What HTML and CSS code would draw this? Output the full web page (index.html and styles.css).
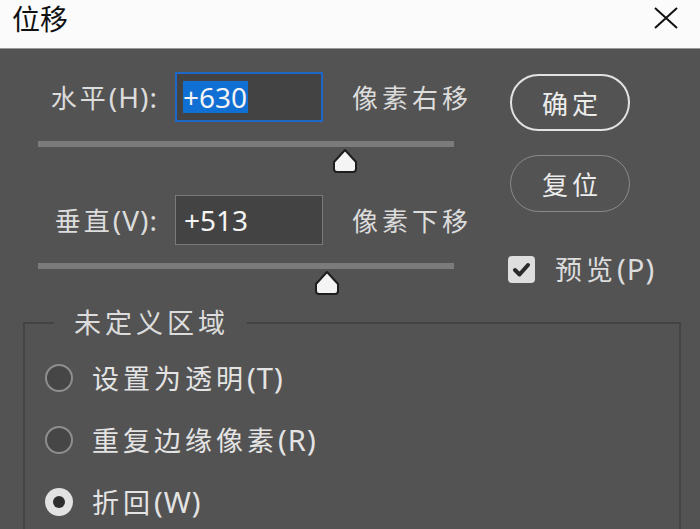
FILE: index.html
```html
<!DOCTYPE html>
<html lang="zh">
<head>
<meta charset="utf-8">
<title>位移</title>
<link rel="stylesheet" href="styles.css">
</head>
<body>
<div class="titlebar">
  <span class="title">位移</span>
  <svg class="close" width="24" height="22" viewBox="0 0 24 22"><path d="M1 1 L23 21 M23 1 L1 21" stroke="#111" stroke-width="2" fill="none"/></svg>
</div>
<div class="main">
  <div class="left">
    <div class="row r1">
      <span class="label"><span class="cjk">水平</span><span class="lat">(H):</span></span>
      <div class="input active"><span class="sel">+630</span></div>
      <span class="suffix">像素右移</span>
    </div>
    <div class="slider s1">
      <div class="track"></div>
      <svg class="thumb" style="left: 73.8%" width="28" height="26" viewBox="0 0 28 26"><path d="M14 2 L25 14 L25 21 Q25 24 22 24 L6 24 Q3 24 3 21 L3 14 Z" fill="#f4f4f4" stroke="#1e1e1e" stroke-width="2" stroke-linejoin="round"/></svg>
    </div>
    <div class="row r2">
      <span class="label"><span class="cjk">垂直</span><span class="lat">(V):</span></span>
      <div class="input"><span class="val">+513</span></div>
      <span class="suffix">像素下移</span>
    </div>
    <div class="slider s2">
      <div class="track"></div>
      <svg class="thumb" style="left: 69.5%" width="28" height="26" viewBox="0 0 28 26"><path d="M14 2 L25 14 L25 21 Q25 24 22 24 L6 24 Q3 24 3 21 L3 14 Z" fill="#f4f4f4" stroke="#1e1e1e" stroke-width="2" stroke-linejoin="round"/></svg>
    </div>
  </div>
  <div class="right">
    <div class="btn primary">确定</div>
    <div class="btn secondary">复位</div>
    <div class="check">
      <span class="box"><svg width="27" height="27" viewBox="0 0 27 27"><path d="M7 14 L11.5 18.5 L20 9" stroke="#2a2a2a" stroke-width="4" fill="none" stroke-linecap="round" stroke-linejoin="round"/></svg></span>
      <span class="check-label"><span class="cjk">预览</span><span class="lat">(P)</span></span>
    </div>
  </div>
</div>
<fieldset class="group">
  <legend>未定义区域</legend>
  <div class="radio"><span class="dot"></span><span class="rlabel"><span class="cjk">设置为透明</span><span class="lat">(T)</span></span></div>
  <div class="radio"><span class="dot"></span><span class="rlabel"><span class="cjk">重复边缘像素</span><span class="lat">(R)</span></span></div>
  <div class="radio"><span class="dot on"></span><span class="rlabel"><span class="cjk">折回</span><span class="lat">(W)</span></span></div>
</fieldset>
</body>
</html>
```
FILE: styles.css
```css
html, body {
  margin: 0;
  padding: 0;
  width: 700px;
  height: 529px;
  overflow: hidden;
  background: #535353;
  font-family: "Noto Sans", "Noto Sans CJK SC", sans-serif;
  color: #dcdcdc;
}
.titlebar {
  height: 49px;
  background: #fbfbfb;
  border-bottom: 1px solid #9a9a9a;
  display: flex;
  justify-content: space-between;
  align-items: flex-start;
  padding: 2px 22px 0 12px;
  box-sizing: border-box;
}
.title {
  font-size: 28px;
  line-height: 34px;
  color: #111;
}
.close {
  margin-top: 5px;
}
.main {
  display: flex;
}
.left {
  padding-left: 38px;
  width: 440px;
}
.row {
  display: flex;
  align-items: center;
  height: 50px;
}
.r1 { margin-top: 23px; }
.r2 { margin-top: 20px; }
.cjk {
  letter-spacing: 4px;
}
.lat {
  letter-spacing: 1px;
  font-size: 1.08em;
}
.label {
  width: 120px;
  text-align: right;
  font-size: 26px;
  margin-right: 17px;
  white-space: nowrap;
}
.label .cjk { letter-spacing: 3px; }
.input {
  width: 148px;
  height: 50px;
  box-sizing: border-box;
  background: #434343;
  border: 1px solid #7a7a7a;
  display: flex;
  align-items: center;
  padding-left: 8px;
  font-size: 28px;
  color: #f4f4f4;
}
.input.active {
  border: 2px solid #1f68c9;
  padding-left: 6px;
}
.sel {
  background: #0f6fd3;
  line-height: 32px;
  padding-right: 1px;
}
.val {
  line-height: 32px;
}
.suffix {
  margin-left: 29px;
  font-size: 26px;
  letter-spacing: 4px;
  white-space: nowrap;
}
.slider {
  position: relative;
  width: 416px;
  height: 34px;
}
.s1 { margin-top: 19px; }
.s2 { margin-top: 18px; }
.track {
  height: 6px;
  background: #7b7b7b;
}
.thumb {
  position: absolute;
  top: 7px;
  transform: translateX(-50%);
}
.right {
  margin-left: 30px;
  display: flex;
  flex-direction: column;
  align-items: flex-start;
}
.btn {
  width: 120px;
  height: 57px;
  box-sizing: border-box;
  border-radius: 29px;
  display: flex;
  align-items: center;
  justify-content: center;
  font-size: 26px;
  letter-spacing: 4px;
  padding-left: 4px;
  color: #ececec;
  margin-left: 2px;
}
.primary {
  margin-top: 25px;
  border: 2px solid #e2e2e2;
}
.secondary {
  margin-top: 24px;
  border: 1.5px solid #8a8a8a;
}
.check {
  margin-top: 43px;
  display: flex;
  align-items: center;
  height: 28px;
}
.box {
  width: 27px;
  height: 27px;
  background: #dedede;
  border-radius: 4px;
  display: block;
}
.box svg { display: block; }
.check-label {
  margin-left: 20px;
  font-size: 27px;
  white-space: nowrap;
}
.group {
  margin: 8px 19px 0 23px;
  padding: 6px 0 0 20px;
  border: 2px solid #434343;
  height: 220px;
}
.group legend {
  margin-left: 9px;
  padding: 0 18px 0 20px;
  font-size: 27px;
  line-height: 36px;
  letter-spacing: 4px;
  color: #dcdcdc;
}
.radio {
  display: flex;
  align-items: center;
  height: 62px;
}
.dot {
  width: 28px;
  height: 28px;
  box-sizing: border-box;
  border-radius: 50%;
  border: 2px solid #8e8e8e;
  background: #464646;
  display: flex;
  align-items: center;
  justify-content: center;
}
.dot.on {
  border: none;
  background: #e2e2e2;
}
.dot.on::after {
  content: "";
  width: 12px;
  height: 12px;
  border-radius: 50%;
  background: #2e2e2e;
}
.rlabel {
  margin-left: 19px;
  font-size: 27px;
  color: #e4e4e4;
  white-space: nowrap;
}
```
